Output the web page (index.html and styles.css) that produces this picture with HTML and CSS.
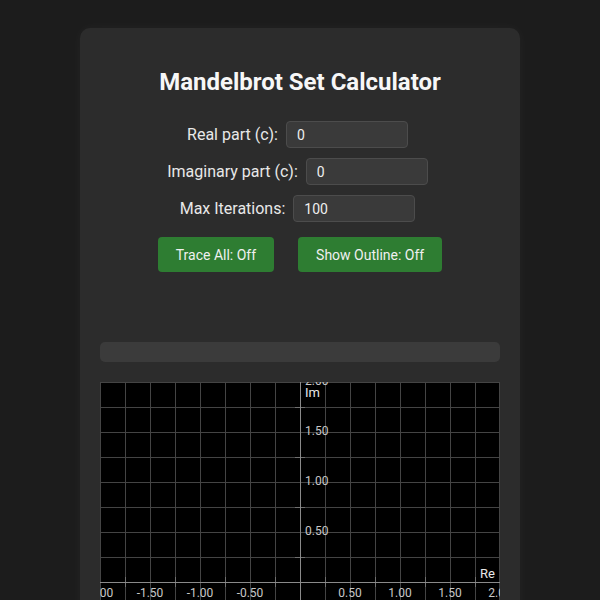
FILE: index.html
```html
<!DOCTYPE html>
<html lang="en">
<head>
<meta charset="utf-8">
<title>Mandelbrot Set Calculator</title>
<link rel="stylesheet" href="styles.css">
</head>
<body>
<main class="card">
  <h1 class="title">Mandelbrot Set Calculator</h1>
  <div class="form">
    <div class="row"><label class="label" for="re">Real part (c):</label><input class="field" id="re" type="text" value="0"></div>
    <div class="row"><label class="label" for="im">Imaginary part (c):</label><input class="field" id="im" type="text" value="0"></div>
    <div class="row"><label class="label" for="it">Max Iterations:</label><input class="field" id="it" type="text" value="100"></div>
  </div>
  <div class="buttons">
    <button class="btn">Trace All: Off</button>
    <button class="btn">Show Outline: Off</button>
  </div>
  <div class="progress"></div>
  <svg class="plot" width="400" height="400" viewBox="0 0 400 400" xmlns="http://www.w3.org/2000/svg">
    <defs>
      <pattern id="grid" width="25" height="25" patternUnits="userSpaceOnUse">
        <path d="M0.5 0 V25 M0 0.5 H25" fill="none" stroke="#444444" stroke-width="1"/>
      </pattern>
    </defs>
    <rect x="0" y="0" width="400" height="400" fill="#000"/>
    <rect x="0" y="0" width="400" height="400" fill="url(#grid)"/>
    <path d="M399.5 0 V400 M0 399.5 H400" stroke="#444444" stroke-width="1"/>
    <path class="ticks" d="M195 25.5 H205 M195 75.5 H205 M195 125.5 H205 M195 175.5 H205 M195 225.5 H205 M195 275.5 H205 M195 325.5 H205 M195 375.5 H205 M25.5 195 V205 M75.5 195 V205 M125.5 195 V205 M175.5 195 V205 M225.5 195 V205 M275.5 195 V205 M325.5 195 V205 M375.5 195 V205"/>
    <path class="axis" d="M200.5 0 V400 M0 200.5 H400"/>
    <g class="ylab">
      <text x="205" y="0">2.00</text>
      <text x="205" y="50">1.50</text>
      <text x="205" y="100">1.00</text>
      <text x="205" y="150">0.50</text>
      <text x="205" y="250">-0.50</text>
      <text x="205" y="300">-1.00</text>
      <text x="205" y="350">-1.50</text>
      <text x="205" y="400">-2.00</text>
    </g>
    <g class="xlab">
      <text x="0" y="212">-2.00</text>
      <text x="50" y="212">-1.50</text>
      <text x="100" y="212">-1.00</text>
      <text x="150" y="212">-0.50</text>
      <text x="250" y="212">0.50</text>
      <text x="300" y="212">1.00</text>
      <text x="350" y="212">1.50</text>
      <text x="400" y="212">2.00</text>
    </g>
    <text class="axname" x="205" y="15">Im</text>
    <text class="axname end" x="395" y="196">Re</text>
  </svg>
</main>
</body>
</html>
```
FILE: styles.css
```css
html, body {
  margin: 0;
  padding: 0;
}
body {
  background: #1c1c1c;
  font-family: Roboto, "Noto Sans", "Liberation Sans", sans-serif;
  color: #e6e6e6;
}
.card {
  width: 400px;
  margin: 28px auto 0;
  padding: 20px 20px 30px;
  background: #2c2c2c;
  border-radius: 10px;
  box-shadow: 0 0 12px rgba(255, 255, 255, 0.04);
}
.title {
  margin: 20px 0 0;
  font-size: 24px;
  line-height: 28px;
  font-weight: 700;
  color: #f7f7f7;
  text-align: center;
}
.form {
  margin-top: 25px;
  display: flex;
  flex-direction: column;
  gap: 10px;
}
.row {
  display: flex;
  justify-content: center;
  align-items: center;
  gap: 8px;
}
.label {
  font-size: 16px;
  line-height: 19px;
  color: #e8e8e8;
}
.field {
  box-sizing: border-box;
  width: 122px;
  height: 27px;
  margin-right: 5px;
  padding: 0 10px;
  font-family: Roboto, "Noto Sans", "Liberation Sans", sans-serif;
  font-size: 14px;
  color: #eeeeee;
  background: #3a3a3a;
  border: 1px solid #4c4c4c;
  border-radius: 4px;
  outline: none;
}
.buttons {
  margin-top: 15px;
  display: flex;
  justify-content: center;
  gap: 24px;
}
.btn {
  height: 35px;
  padding: 0 18px;
  font-family: Roboto, "Noto Sans", "Liberation Sans", sans-serif;
  font-size: 14px;
  color: #f0f0f0;
  background: #2e7d32;
  border: none;
  border-radius: 4px;
}
.progress {
  margin-top: 70px;
  height: 20px;
  background: #3b3b3b;
  border-radius: 5px;
}
.plot {
  display: block;
  margin-top: 20px;
  font-family: Roboto, "Noto Sans", "Liberation Sans", sans-serif;
}
.axis {
  stroke: #8a8a8a;
  stroke-width: 1;
  fill: none;
}
.ticks {
  stroke: #707070;
  stroke-width: 1;
  fill: none;
}
.ylab text {
  font-size: 12px;
  fill: #c8c8c8;
  dominant-baseline: middle;
}
.xlab text {
  font-size: 12px;
  fill: #c8c8c8;
  dominant-baseline: middle;
  text-anchor: middle;
}
.axname {
  font-size: 13px;
  fill: #e8e8e8;
}
.axname.end {
  text-anchor: end;
}
```
